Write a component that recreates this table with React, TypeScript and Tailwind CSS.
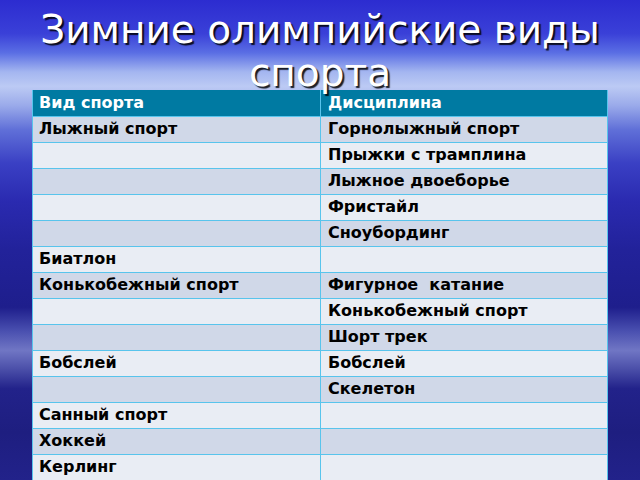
import React from "react";

const rows: [string, string][] = [
  ["Лыжный спорт", "Горнолыжный спорт"],
  ["", "Прыжки с трамплина"],
  ["", "Лыжное двоеборье"],
  ["", "Фристайл"],
  ["", "Сноубординг"],
  ["Биатлон", ""],
  ["Конькобежный спорт", "Фигурное  катание"],
  ["", "Конькобежный спорт"],
  ["", "Шорт трек"],
  ["Бобслей", "Бобслей"],
  ["", "Скелетон"],
  ["Санный спорт", ""],
  ["Хоккей", ""],
  ["Керлинг", ""],
];

export default function App() {
  return (
    <div className="relative w-[640px] h-[480px] overflow-hidden bg-[linear-gradient(to_bottom,#2c2cd0_0%,#3a40d8_7%,#5a6ee4_11%,#a4b6f0_15%,#bccaf4_18%,#9aaaea_22%,#6070d8_27%,#3a40c4_34%,#2a2ab0_42%,#22229a_52%,#1e1e8c_64%,#4a50b0_69%,#7076c4_73%,#4a4ea8_77%,#22228a_81%,#1e1e80_90%,#22228a_100%)] font-['DejaVu_Sans',sans-serif]">
      <div className="relative z-10 flex flex-col items-center pt-[8px] text-[39px] leading-[43px] text-white text-center [text-shadow:2px_2px_1px_rgba(0,0,0,0.85)] h-[90px]">
        <div className="whitespace-nowrap">Зимние олимпийские виды</div>
        <div>спорта</div>
      </div>
      <div className="ml-[32px] w-[576px] border-l border-r border-[#58c4ec]">
        <div className="flex h-[26px] bg-[#007aa2] text-white font-bold text-[16px] leading-[18px]">
          <div className="w-[288px] pl-[6px] pt-[4px] border-r border-[#58c4ec]">Вид спорта</div>
          <div className="flex-1 pl-[7px] pt-[4px]">Дисциплина</div>
        </div>
        {rows.map(([a, b], i) => (
          <div
            key={i}
            className={`flex h-[26px] border-t border-[#58c4ec] text-black font-bold text-[16px] leading-[18px] ${
              i % 2 === 0 ? "bg-[#d0d8e8]" : "bg-[#e9edf4]"
            }`}
          >
            <div className="w-[288px] pl-[6px] pt-[3px] border-r border-[#58c4ec] whitespace-pre">{a}</div>
            <div className="flex-1 pl-[7px] pt-[3px] whitespace-pre">{b}</div>
          </div>
        ))}
      </div>
    </div>
  );
}
